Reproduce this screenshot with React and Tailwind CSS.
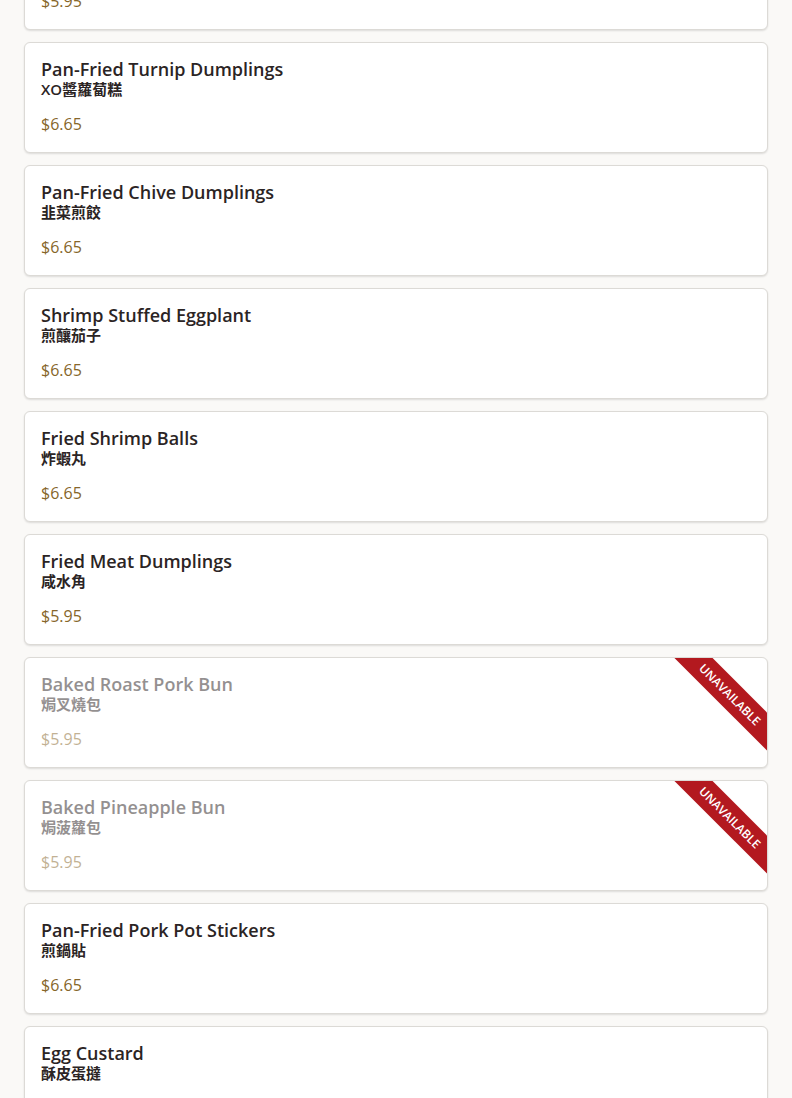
const items = [
  { name: "Sesame Balls", zh: "煎堆", price: "$5.95" },
  { name: "Pan-Fried Turnip Dumplings", zh: "XO醬蘿蔔糕", price: "$6.65" },
  { name: "Pan-Fried Chive Dumplings", zh: "韭菜煎餃", price: "$6.65" },
  { name: "Shrimp Stuffed Eggplant", zh: "煎釀茄子", price: "$6.65" },
  { name: "Fried Shrimp Balls", zh: "炸蝦丸", price: "$6.65" },
  { name: "Fried Meat Dumplings", zh: "咸水角", price: "$5.95" },
  { name: "Baked Roast Pork Bun", zh: "焗叉燒包", price: "$5.95", unavailable: true },
  { name: "Baked Pineapple Bun", zh: "焗菠蘿包", price: "$5.95", unavailable: true },
  { name: "Pan-Fried Pork Pot Stickers", zh: "煎鍋貼", price: "$6.65" },
  { name: "Egg Custard", zh: "酥皮蛋撻", price: "$5.95" },
];

function MenuCard({ item }) {
  return (
    <div className="relative overflow-hidden rounded-md border border-[#dcdad6] bg-white shadow-[0_1px_2px_rgba(0,0,0,0.12)]">
      <div className={"px-4 pt-4 pb-[18px] " + (item.unavailable ? "opacity-50" : "")}>
        <div className="text-[18px] leading-[20px] font-semibold text-[#2b2424]">{item.name}</div>
        <div className="text-[15px] leading-[20px] font-semibold text-[#2b2424]">{item.zh}</div>
        <div className="mt-[15px] text-[16px] leading-[20px] text-[#86662a]">{item.price}</div>
      </div>
      {item.unavailable && (
        <div className="absolute right-[-63px] top-[23px] h-[27px] w-[200px] rotate-45 bg-[#b3191f] flex items-center justify-center text-[12px] font-semibold leading-none text-white">
          UNAVAILABLE
        </div>
      )}
    </div>
  );
}

export default function App() {
  return (
    <div
      className="min-h-screen bg-[#faf9f7] overflow-hidden"
      style={{ fontFamily: "'Open Sans', 'Noto Sans CJK TC', sans-serif" }}
    >
      <div className="mx-6 -mt-[81px] flex flex-col gap-3 pb-6">
        {items.map((item, i) => (
          <MenuCard key={i} item={item} />
        ))}
      </div>
    </div>
  );
}
